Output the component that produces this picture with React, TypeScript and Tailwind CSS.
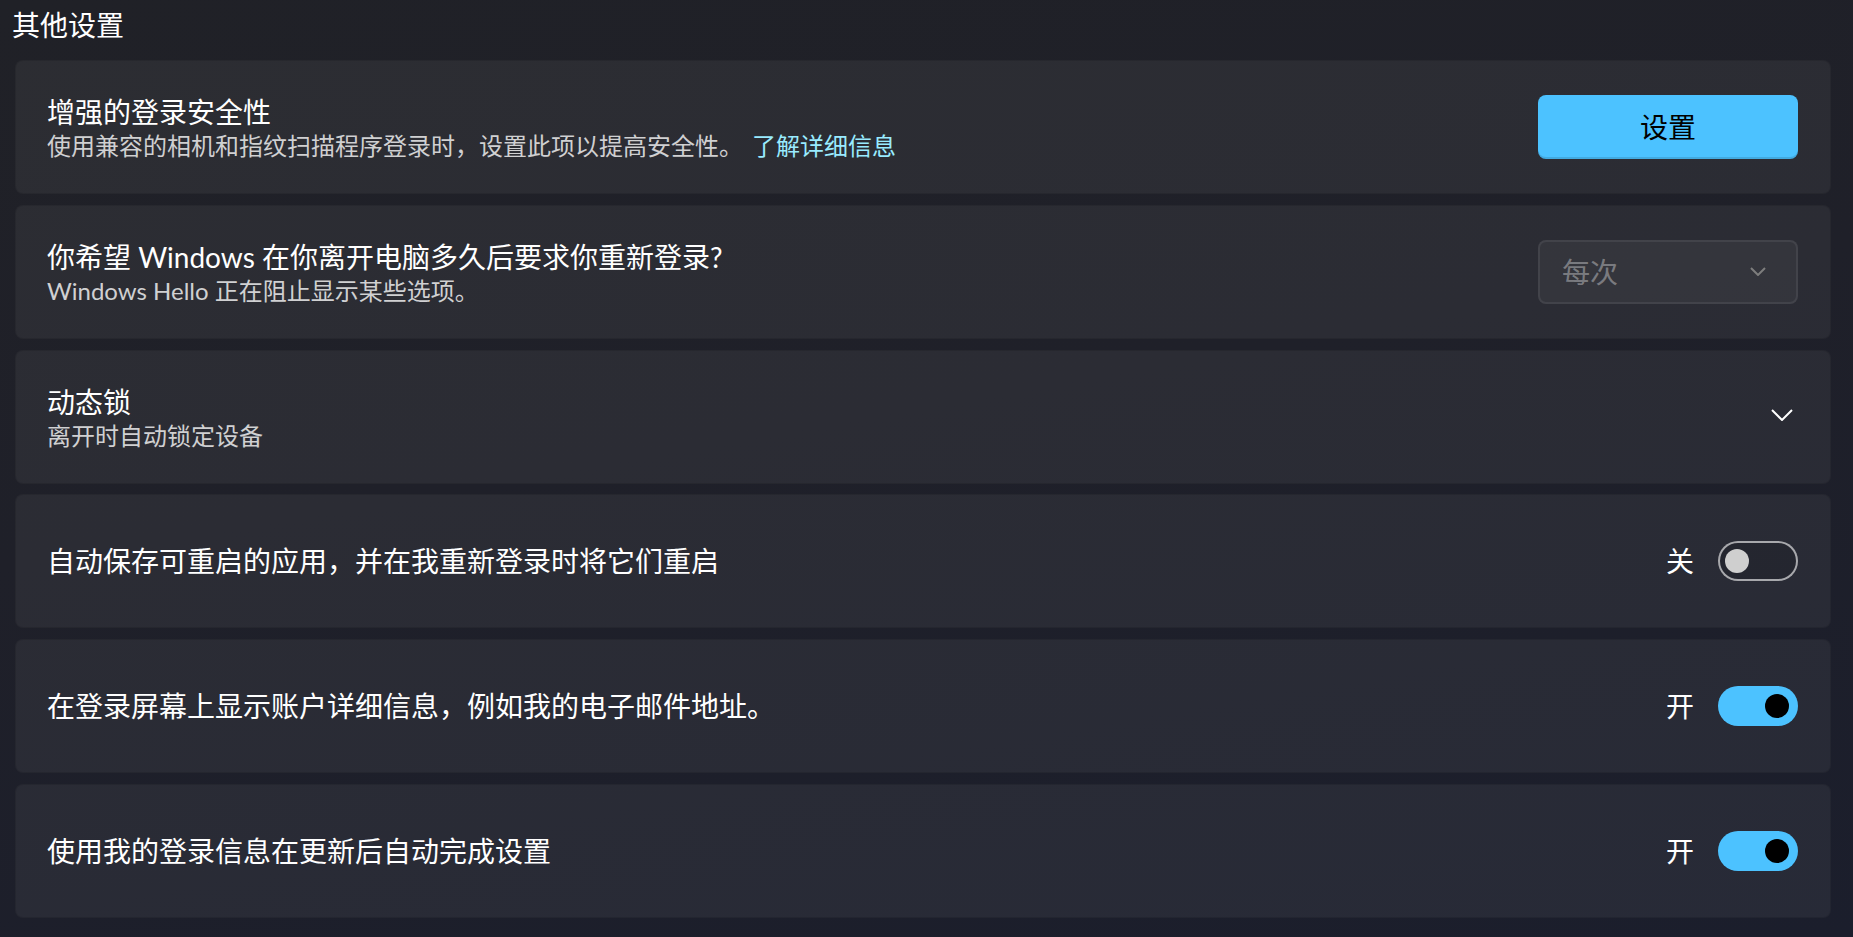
import React from "react";

const Card = ({ children }: { children: React.ReactNode }) => (
  <div className="h-[134px] shrink-0 rounded-[8px] bg-white/[0.055] border border-black/10 flex items-center pl-[31px] pr-[32px]">
    {children}
  </div>
);

const Title = ({ children }: { children: React.ReactNode }) => (
  <div className="text-[28px] leading-[38px] text-white">{children}</div>
);

const Sub = ({ children }: { children: React.ReactNode }) => (
  <div className="text-[24px] leading-[30px] text-white/[0.786]">{children}</div>
);

const ToggleOn = ({ label }: { label: string }) => (
  <div className="flex items-center">
    <span className="text-[28px] leading-[38px] text-white mr-[24px]">{label}</span>
    <div className="relative w-[80px] h-[40px] rounded-full bg-[#4cc2ff]">
      <div className="absolute right-[9px] top-[8px] w-[24px] h-[24px] rounded-full bg-black" />
    </div>
  </div>
);

const ToggleOff = ({ label }: { label: string }) => (
  <div className="flex items-center">
    <span className="text-[28px] leading-[38px] text-white mr-[24px]">{label}</span>
    <div className="w-[80px] h-[40px] rounded-full border-2 border-white/60 bg-black/10 flex items-center pl-[5px]">
      <div className="w-[24px] h-[24px] rounded-full bg-[#cfcfcf]" />
    </div>
  </div>
);

export default function App() {
  return (
    <div
      className="w-full h-[937px] overflow-hidden bg-[linear-gradient(170deg,#202127_0%,#1f2029_45%,#1b1e2c_100%)] font-['Lato','Noto_Sans_CJK_SC',sans-serif] text-white"
    >
      <div className="pl-[12px] pt-[5px] text-[28px] leading-[40px] text-white h-[60px]">其他设置</div>
      <div className="pl-[15px] pr-[22px] flex flex-col gap-[10.8px]">
        <Card>
          <div className="flex-1">
            <Title>增强的登录安全性</Title>
            <Sub>
              使用兼容的相机和指纹扫描程序登录时，设置此项以提高安全性。
              <span className="ml-[9px] text-[#99ebff]">了解详细信息</span>
            </Sub>
          </div>
          <button className="w-[260px] h-[64px] rounded-[8px] bg-[#4cc2ff] text-black text-[28px] shadow-[inset_0_-2px_0_rgba(0,0,0,0.12)]">
            设置
          </button>
        </Card>
        <Card>
          <div className="flex-1">
            <Title>你希望 Windows 在你离开电脑多久后要求你重新登录?</Title>
            <Sub>Windows Hello 正在阻止显示某些选项。</Sub>
          </div>
          <div className="w-[260px] h-[64px] rounded-[8px] border-2 border-white/[0.07] bg-white/[0.045] flex items-center justify-between pl-[22px] pr-[30px]">
            <span className="text-[28px] text-white/[0.36]">每次</span>
            <svg width="16" height="9" viewBox="0 0 16 9">
              <polyline points="1,1 8,8 15,1" fill="none" stroke="#7d7d7d" strokeWidth="2" />
            </svg>
          </div>
        </Card>
        <Card>
          <div className="flex-1">
            <Title>动态锁</Title>
            <Sub>离开时自动锁定设备</Sub>
          </div>
          <svg width="22" height="12" viewBox="0 0 22 12" className="mr-[5px] mb-[4px]">
            <polyline points="1,1 11,11 21,1" fill="none" stroke="#ffffff" strokeWidth="2" />
          </svg>
        </Card>
        <Card>
          <div className="flex-1">
            <Title>自动保存可重启的应用，并在我重新登录时将它们重启</Title>
          </div>
          <ToggleOff label="关" />
        </Card>
        <Card>
          <div className="flex-1">
            <Title>在登录屏幕上显示账户详细信息，例如我的电子邮件地址。</Title>
          </div>
          <ToggleOn label="开" />
        </Card>
        <Card>
          <div className="flex-1">
            <Title>使用我的登录信息在更新后自动完成设置</Title>
          </div>
          <ToggleOn label="开" />
        </Card>
      </div>
    </div>
  );
}
